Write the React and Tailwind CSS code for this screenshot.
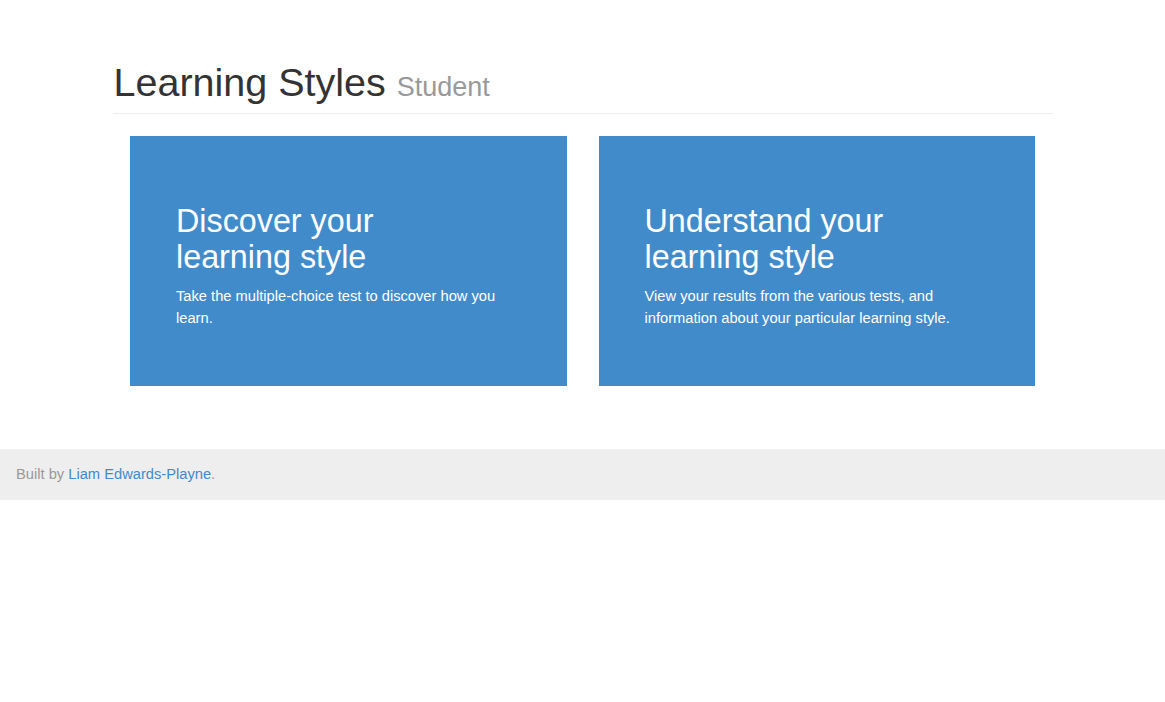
export default function App() {
  return (
    <div className="min-h-screen bg-white font-['Liberation_Sans',Arial,sans-serif] text-[#333]">
      <div className="mx-auto w-[940px] pt-[61px]">
        {/* Page header */}
        <div className="border-b border-[#eee] pb-[9px]">
          <h1 className="pl-[1px] text-[39.5px] leading-[1.1]">
            Learning Styles <span className="text-[27px] text-[#999]">Student</span>
          </h1>
        </div>

        {/* Cards */}
        <div className="mt-[22px] grid grid-cols-2 gap-[32px] px-[17.5px]">
          <div className="h-[250px] bg-[#428bca] px-[46px] pt-[67px] text-white">
            <h2 className="text-[32.3px] leading-[36px]">
              Discover your
              <br />
              learning style
            </h2>
            <p className="mt-[10px] text-[14.7px] leading-[22px]">
              Take the multiple-choice test to discover how you learn.
            </p>
          </div>
          <div className="h-[250px] bg-[#428bca] px-[46px] pt-[67px] text-white">
            <h2 className="text-[32.3px] leading-[36px]">
              Understand your
              <br />
              learning style
            </h2>
            <p className="mt-[10px] text-[14.7px] leading-[22px]">
              View your results from the various tests, and information about your particular learning style.
            </p>
          </div>
        </div>
      </div>

      {/* Footer */}
      <div className="mt-[63px] bg-[#eee] px-4 py-[15px] text-[14.7px] leading-[21px] text-[#999]">
        Built by <a href="#" className="text-[#428bca]">Liam Edwards-Playne</a>.
      </div>
    </div>
  );
}
